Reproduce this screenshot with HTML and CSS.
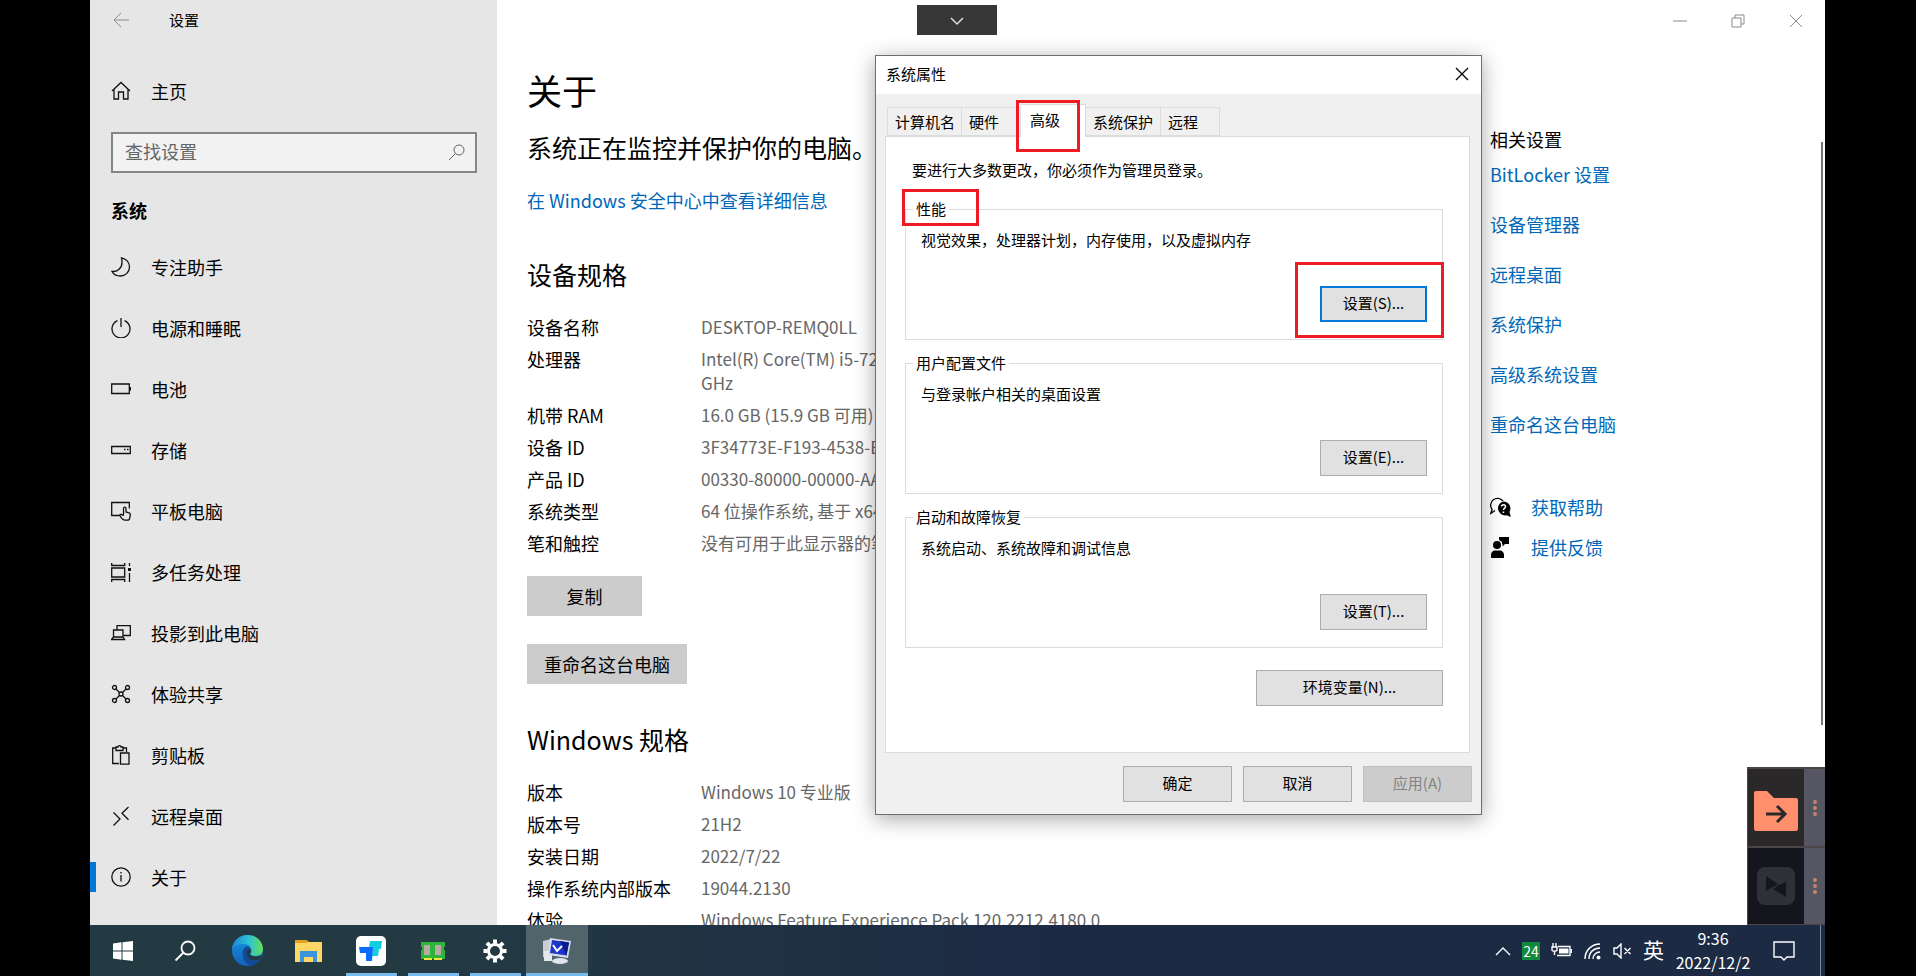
FILE: index.html
```
<!DOCTYPE html>
<html lang="zh-CN">
<head>
  <meta charset="UTF-8" />
  <meta name="viewport" content="width=device-width, initial-scale=1.0"/>
  <title>设置 - 关于</title>
  <link rel="stylesheet" href="styles.css">
</head>
<body>

  <div class="desktop">
    <div class="window">

      <aside class="sidebar">
        <header class="sidebar-title">
          <button class="back" aria-label="返回">
            <svg width="18" height="18" viewBox="0 0 18 18"><path d="M17 9H2M9 2L2 9l7 7"/></svg>
          </button>
          <span>设置</span>
        </header>

        <a class="nav-link home" href="#">
          <svg class="icon" viewBox="0 0 20 20"><path d="M1 10L10 1.500l9 8.500M3 8.500V18h4.500v-7h5v7H17V8.500"/></svg>
          主页
        </a>

        <div class="search">
          <input type="text" placeholder="查找设置" aria-label="查找设置">
          <svg width="17" height="17" viewBox="0 0 17 17"><circle cx="11" cy="6" r="5"/><path d="M7.500 9.500L1 16"/></svg>
        </div>

        <h2 class="group">系统</h2>

        <nav>
          <a class="nav-link" href="#">
            <svg class="icon" viewBox="0 0 20 20"><path d="M10.500.8c4.500 1 8 4.500 8 9.200a9 9 0 0 1-9 9C5.500 19 2.500 17.300 1 14.500c5.500.3 10-3.500 10-9 0-1.700-.1-3.200-.5-4.700z"/></svg>
            专注助手
          </a>
          <a class="nav-link" href="#">
            <svg class="icon" viewBox="0 0 20 20"><path d="M6.500 2.600a9 9 0 1 0 7 0M10 0v9"/></svg>
            电源和睡眠
          </a>
          <a class="nav-link" href="#">
            <svg class="icon" viewBox="0 0 20 20"><path d="M.7 5h17.600v9.500H.7zM19.500 8v3.500"/></svg>
            电池
          </a>
          <a class="nav-link" href="#">
            <svg class="icon" viewBox="0 0 20 20"><path d="M.7 6.500h18.600v7H.7zM13 9.500h1.500M16 9.500h1.500"/></svg>
            存储
          </a>
          <a class="nav-link" href="#">
            <svg class="icon" viewBox="0 0 20 20"><path d="M9 14.500H.7v-13h17.600v6M12.500 14V7.500c0-1.800 2.500-1.800 2.500 0V11l3 .8c1 .3 1.400 1 1.300 2l-.5 3c-.2 1.500-1.200 2.400-2.600 2.400h-2c-3 0-4.200-2.500-5.200-4.700-.3-1.300 1.500-1.500 2.200-.5z"/></svg>
            平板电脑
          </a>
          <a class="nav-link" href="#">
            <svg class="icon" viewBox="0 0 20 20"><path d="M.7 1v2.500h13V1M.7 6h13v9H.7zM.7 20v-2.500h13V20M18.500 1v3M18.500 11v9"/><path d="M17 6h3v3h-3z" fill="#111" stroke="none"/></svg>
            多任务处理
          </a>
          <a class="nav-link" href="#">
            <svg class="icon" viewBox="0 0 20 20"><path d="M6 7V2.700h13.300v9.800h-7M2.500 7h9.500v7h-9.500zM.5 16.500L2.500 14h9.500l1.500 2.500z"/></svg>
            投影到此电脑
          </a>
          <a class="nav-link" href="#">
            <svg class="icon" viewBox="0 0 20 20"><circle cx="3.500" cy="3.500" r="2"/><circle cx="16.500" cy="3.500" r="2"/><circle cx="3.500" cy="16.500" r="2"/><circle cx="16.500" cy="16.500" r="2"/><circle cx="10" cy="10" r="2"/><path d="M5 5l3.500 3.500M15 5l-3.500 3.500M5 15l3.500-3.500M15 15l-3.500-3.500"/></svg>
            体验共享
          </a>
          <a class="nav-link" href="#">
            <svg class="icon" viewBox="0 0 20 20"><path d="M8 18.500H1.700V3H5M12 3h3.500v4M5 2h2c0-1.800 3-1.800 3 0h2v3.500H5zM9.500 8H18v11.200H9.500z"/></svg>
            剪贴板
          </a>
          <a class="nav-link" href="#">
            <svg class="icon" viewBox="0 0 20 20"><path d="M2.500 6.500L9 13l-6.500 6.500M17.500 1L11 7.300l6.500 6.500"/></svg>
            远程桌面
          </a>
          <a class="nav-link active" href="#">
            <svg class="icon" viewBox="0 0 20 20"><circle cx="10" cy="10" r="9.200"/><path d="M10 8v6.500M10 5v1.500"/></svg>
            关于
          </a>
        </nav>
      </aside>

      <div class="page">
        <div class="controls">
          <button aria-label="最小化"><svg width="14" height="14" viewBox="0 0 14 14"><path d="M0 7h14"/></svg></button>
          <button aria-label="还原"><svg width="14" height="14" viewBox="0 0 14 14"><path d="M1 4h9v9H1zM4 4V1h9v9h-3"/></svg></button>
          <button aria-label="关闭"><svg width="14" height="14" viewBox="0 0 14 14"><path d="M1 1l12 12M13 1L1 13"/></svg></button>
        </div>

        <div class="columns">
          <main class="about">
            <h1>关于</h1>
            <p class="tagline">系统正在监控并保护你的电脑。</p>
            <a class="security" href="#">在 Windows 安全中心中查看详细信息</a>

            <h2>设备规格</h2>
            <table>
              <tr><th>设备名称</th><td>DESKTOP-REMQ0LL</td></tr>
              <tr><th>处理器</th><td>Intel(R) Core(TM) i5-7200U<br>GHz</td></tr>
              <tr><th>机带 RAM</th><td>16.0 GB (15.9 GB 可用)</td></tr>
              <tr><th>设备 ID</th><td>3F34773E-F193-4538-B</td></tr>
              <tr><th>产品 ID</th><td>00330-80000-00000-AA</td></tr>
              <tr><th>系统类型</th><td>64 位操作系统, 基于 x64</td></tr>
              <tr><th>笔和触控</th><td>没有可用于此显示器的笔</td></tr>
            </table>
            <button class="action copy">复制</button>
            <button class="action rename">重命名这台电脑</button>

            <h2 class="second">Windows 规格</h2>
            <table>
              <tr><th>版本</th><td>Windows 10 专业版</td></tr>
              <tr><th>版本号</th><td>21H2</td></tr>
              <tr><th>安装日期</th><td>2022/7/22</td></tr>
              <tr><th>操作系统内部版本</th><td>19044.2130</td></tr>
              <tr><th>体验</th><td>Windows Feature Experience Pack 120.2212.4180.0</td></tr>
            </table>
          </main>

          <aside class="related">
            <h3>相关设置</h3>
            <ul>
              <li><a href="#">BitLocker 设置</a></li>
              <li><a href="#">设备管理器</a></li>
              <li><a href="#">远程桌面</a></li>
              <li><a href="#">系统保护</a></li>
              <li><a href="#">高级系统设置</a></li>
              <li><a href="#">重命名这台电脑</a></li>
            </ul>
            <div class="help">
              <svg width="21" height="21" viewBox="0 0 21 21"><path d="M5 13.500L.8 16.500l1.300-4A6.500 6.500 0 1 1 13 4" fill="none" stroke="#000" stroke-width="1.300"/><path d="M13.500 4.500a7 7 0 0 1 6 10.500l1.300 5-4.300-1.800a7 7 0 1 1-3-13.700z"/><path d="M11.500 9.500c0-2.500 4-2.500 4 0 0 1.700-2 1.500-2 3.500M13.500 14.500V16" fill="none" stroke="#fff" stroke-width="1.500"/></svg>
              <a href="#">获取帮助</a>
            </div>
            <div class="help">
              <svg width="21" height="21" viewBox="0 0 21 21"><circle cx="7" cy="8" r="4"/><path d="M1 21v-3c0-3 2-4.500 4-4.500h5c2 0 4 1.500 4 4.500v3zM9 0h10v7h-4l-2.500 2.500V7H12V5L9 3z"/></svg>
              <a href="#">提供反馈</a>
            </div>
          </aside>
        </div>
        <div class="scrollbar"></div>
      </div>
    </div>

    <!-- 系统属性 -->
    <section class="dialog">
      <header class="dialog-title">
        <span>系统属性</span>
        <button aria-label="关闭"><svg width="14" height="14" viewBox="0 0 14 14"><path d="M1 1l12 12M13 1L1 13"/></svg></button>
      </header>
      <div class="dialog-body">
        <div class="tabs">
          <button class="tab wide">计算机名</button>
          <button class="tab">硬件</button>
          <button class="tab current">高级<span class="mark mark-tab"></span></button>
          <button class="tab wide">系统保护</button>
          <button class="tab">远程</button>
        </div>
        <div class="panel">
          <p>要进行大多数更改，你必须作为管理员登录。</p>
          <fieldset>
            <legend>性能<span class="mark mark-legend"></span></legend>
            <p>视觉效果，处理器计划，内存使用，以及虚拟内存</p>
            <button class="btn focused">设置(S)...<span class="mark mark-button"></span></button>
          </fieldset>
          <fieldset>
            <legend>用户配置文件</legend>
            <p>与登录帐户相关的桌面设置</p>
            <button class="btn">设置(E)...</button>
          </fieldset>
          <fieldset>
            <legend>启动和故障恢复</legend>
            <p>系统启动、系统故障和调试信息</p>
            <button class="btn">设置(T)...</button>
          </fieldset>
          <button class="btn env">环境变量(N)...</button>
        </div>
        <div class="dialog-buttons">
          <button class="btn">确定</button>
          <button class="btn">取消</button>
          <button class="btn" disabled>应用(A)</button>
        </div>
      </div>
    </section>

    <button class="handle" aria-label="展开">
      <svg width="14" height="9" viewBox="0 0 14 9"><path d="M1 1l6 6 6-6"/></svg>
    </button>

    <!-- 悬浮工具 -->
    <div class="dock">
      <div class="dock-item">
        <div class="dock-icon">
          <svg width="44" height="40" viewBox="0 0 44 40"><path d="M2 0h11l7 7h22a2 2 0 0 1 2 2v29a2 2 0 0 1-2 2H2a2 2 0 0 1-2-2V2a2 2 0 0 1 2-2z" fill="#ff8f6d"/><path d="M12 23h19M23 15l8 8-8 8" fill="none" stroke="#2a2828" stroke-width="3"/></svg>
        </div>
        <div class="dots"><i></i><i></i><i></i></div>
      </div>
      <div class="dock-item dark">
        <div class="dock-icon">
          <svg width="38" height="38" viewBox="0 0 38 38"><rect width="38" height="38" rx="8" fill="#303137"/><path d="M9 9v14l20-8v15z" fill="#15161d"/><path d="M9 9l12 8-12 7zM29 15v15l-13-8z" fill="#15161d"/><path d="M13 22l12-6" stroke="#303137"/></svg>
        </div>
        <div class="dots"><i></i><i></i><i></i></div>
      </div>
    </div>

    <footer class="taskbar">
      <button class="task" aria-label="开始">
        <svg width="20" height="20" viewBox="0 0 20 20" fill="#fff"><path d="M0 2.500l8.500-1.200v8.200H0zM9.500 1.200L20 0v9.500H9.500zM0 10.500h8.500v8.200L0 17.500zM9.500 10.500H20V20L9.500 18.800z"/></svg>
      </button>
      <button class="task" aria-label="搜索">
        <svg width="22" height="22" viewBox="0 0 22 22" fill="none" stroke="#fff" stroke-width="1.800"><circle cx="14" cy="8" r="6.500"/><path d="M9.500 12.500L1.500 20.500"/></svg>
      </button>
      <button class="task" aria-label="Microsoft Edge">
        <svg width="31" height="31" viewBox="0 0 31 31">
          <defs>
            <linearGradient id="edgeTop"><stop offset="0" stop-color="#1687d9"/><stop offset=".55" stop-color="#2fc2d4"/><stop offset="1" stop-color="#67dd4f"/></linearGradient>
            <linearGradient id="edgeSide" x2="0" y2="1"><stop offset="0" stop-color="#1694dd"/><stop offset="1" stop-color="#1560bd"/></linearGradient>
          </defs>
          <circle cx="15.500" cy="15.500" r="15.500" fill="url(#edgeSide)"/>
          <path d="M11 22c-2-8 3-12 6-10l5 8 7 3c-3 5-6 7-9 8-4-1-8-4-9-9z" fill="#124a94"/>
          <path d="M0 14C1 5 8 0 15.500 0 25 0 31 7 31 14c0 5-4 7-8 7-3 0-5-1-5-2s1.500-2 1.500-4c0-3-3-6-7.500-6C6 9 2 11 0 14z" fill="url(#edgeTop)"/>
          <path d="M18 19c1 3 7 3.500 12 1l-1 3c-4 3-10 3-13-1-2-3-1-7 1-8 2 0 3 3 1 5z" fill="#233a43"/>
        </svg>
      </button>
      <button class="task" aria-label="文件资源管理器">
        <svg width="28" height="24" viewBox="0 0 28 24"><path d="M0 1h11l3 2h13v20H0z" fill="#ffd766"/><path d="M0 1h11l2 3H0z" fill="#e5a018"/><path d="M5 23V12h17v11h-4v-5H9v5z" fill="#3a96dc"/></svg>
      </button>
      <button class="task open" aria-label="ToDesk">
        <svg width="30" height="30" viewBox="0 0 30 30"><rect width="30" height="30" rx="5" fill="#fff"/><path d="M14 5h12l-1 8h-2l-1 7h-6l1-9h-4z" fill="#12cfe0"/><path d="M3 11h14l-1 14h-6v-8H4z" fill="#0a6cff"/></svg>
      </button>
      <button class="task open" aria-label="内存清理">
        <svg width="24" height="18" viewBox="0 0 24 18"><path d="M0 0h24v5h-1v3h1v9H0V8h1V5H0z" fill="#2cb53a"/><path d="M3 3h6v10H3zM14 3h6v10h-6z" fill="#b9aaa5"/><path d="M3 17h8M13 17h8" stroke="#ffe93b" stroke-width="2"/></svg>
      </button>
      <button class="task open" aria-label="设置">
        <svg width="24" height="24" viewBox="-12 -12 24 24"><circle r="6.500" fill="none" stroke="#fff" stroke-width="3"/><path d="M0-11.500v4M0 7.500v4M-11.500 0h4M7.500 0h4M-8.100-8.100l2.800 2.800M5.300 5.300l2.800 2.800M-8.100 8.100l2.800-2.800M5.300-5.300l2.800-2.800" stroke="#fff" stroke-width="4"/></svg>
      </button>
      <button class="task open selected" aria-label="系统属性">
        <svg width="30" height="28" viewBox="0 0 30 28"><path d="M1 4l8-2v20l-8-2z" fill="#c9ced3"/><path d="M2 14h8v10H2z" fill="#e6e9eb"/><path d="M8 1l21 3-3 17L6 18z" fill="#d7dbe6"/><path d="M10 3l17 2.500-2.500 13L8 16z" fill="#1f35c8"/><path d="M18 4l9 1.500-2.500 13z" fill="#0b1a8c"/><path d="M11 8l4 6 5-5" fill="none" stroke="#fff" stroke-width="2"/><ellipse cx="18" cy="24" rx="8" ry="3" fill="#e1e4ea"/></svg>
      </button>

      <div class="tray">
        <svg width="16" height="10" viewBox="0 0 16 10"><path d="M1 9l7-7 7 7"/></svg>
        <span class="temp">24</span>
        <svg width="22" height="16" viewBox="0 0 22 16"><path d="M7 3.500h12v9H6M1 4h5v3c0 1.500-5 1.500-5 0zM2 0v4M5 0v4M3.500 8.500V12"/><path d="M8 5.500h9.500v5H8zM19.500 6H21v4h-1.500z" fill="#fff" stroke="none"/></svg>
        <svg width="18" height="18" viewBox="0 0 18 18"><path d="M1 17C1 8 8 2 16 2M5 17C5 10 10 6 16 6M9 17c0-4 3-7 7-7"/><circle cx="14.500" cy="15.500" r="2" fill="#fff" stroke="none"/></svg>
        <svg width="19" height="16" viewBox="0 0 19 16"><path d="M1 5h3l4-4v14l-4-4H1zM11.500 5l6 6M17.500 5l-6 6"/></svg>
        <span class="ime">英</span>
        <time class="clock">9:36<br>2022/12/2</time>
        <svg class="notice" width="22" height="22" viewBox="0 0 22 22"><path d="M1 2h20v15h-7l-3 3-3-3H1z"/></svg>
        <span class="peek"></span>
      </div>
    </footer>
  </div>

</body>
</html>
```
FILE: styles.css
```
* {
  box-sizing: border-box;
}

body {
  margin: 0;
  padding: 0 91px 0 90px;
  background-color: #000;
  color: #000;
  font-family: "Noto Sans CJK SC", "Noto Sans", sans-serif;
  font-size: 18px;
  line-height: 24px;
}

button, input {
  font: inherit;
  color: inherit;
}

button {
  border: none;
  background: none;
  padding: 0;
}

h1, h2, h3, p, ul {
  margin: 0;
  padding: 0;
  font-weight: normal;
}

a {
  color: #0067b8;
  text-decoration: none;
}

.desktop {
  position: relative;
  height: 100vh;
  display: flex;
  flex-direction: column;
  overflow: hidden;
  background-color: #fff;
}

.window {
  flex: 1;
  min-height: 0;
  display: flex;
  overflow: hidden;
}

/* sidebar */
.sidebar {
  width: 407px;
  flex-shrink: 0;
  background-color: #e6e6e6;
}

.sidebar-title {
  display: flex;
  align-items: center;
  gap: 39px;
  height: 40px;
  padding-left: 22px;
  font-size: 15px;
}

.back {
  display: flex;
}

.back svg {
  fill: none;
  stroke: #8c8c8c;
}

.nav-link {
  display: flex;
  align-items: center;
  gap: 20px;
  height: 61px;
  padding-left: 21px;
  color: #000;
}

.nav-link.home {
  height: 40px;
  margin-top: 31px;
}

.nav-link.active {
  background: linear-gradient(#0078d7, #0078d7) left center / 6px 30px no-repeat;
}

.icon {
  width: 20px;
  height: 20px;
  fill: none;
  stroke: #111;
  stroke-width: 1.3;
}

.search {
  display: flex;
  align-items: center;
  height: 41px;
  margin: 21px 20px 0 21px;
  padding: 0 10px 0 12px;
  border: 2px solid #858787;
  background-color: #f2f2f2;
}

.search input {
  flex: 1;
  min-width: 0;
  padding: 0 0 4px;
  border: none;
  outline: none;
  background: none;
}

.search input::placeholder {
  color: #666;
}

.search svg {
  fill: none;
  stroke: #666;
}

.group {
  margin: 25px 0 14px 21px;
  font-size: 18px;
  font-weight: bold;
}

/* settings page */
.page {
  flex: 1;
  min-width: 0;
  position: relative;
}

.controls {
  display: flex;
  justify-content: flex-end;
  height: 40px;
}

.controls button {
  width: 58px;
}

.controls svg {
  fill: none;
  stroke: #8a8a8a;
}

.columns {
  display: flex;
}

.about {
  flex: 1;
  min-width: 0;
  padding: 26px 0 0 30px;
  white-space: nowrap;
}

.about h1 {
  font-size: 35px;
  line-height: 48px;
}

.tagline {
  margin-top: 17px;
  font-size: 25px;
  line-height: 32px;
}

.security {
  display: block;
  margin-top: 25px;
}

.about h2 {
  margin: 46px 0 21px;
  font-size: 25px;
  line-height: 32px;
}

.about h2.second {
  margin-top: 39px;
}

table {
  border-collapse: collapse;
}

th, td {
  padding: 4px 0;
  text-align: left;
  vertical-align: top;
  font-weight: normal;
}

th {
  width: 174px;
}

td {
  color: #666;
  font-size: 17px;
}

.action {
  display: block;
  height: 40px;
  background-color: #ccc;
}

.copy {
  width: 115px;
  margin-top: 17px;
}

.rename {
  width: 160px;
  margin-top: 28px;
}

.related {
  width: 335px;
  flex-shrink: 0;
  padding-top: 87px;
}

.related h3 {
  font-size: 18px;
}

.related ul {
  list-style: none;
  margin: 11px 0 25px;
}

.related li {
  height: 50px;
}

.help {
  display: flex;
  align-items: center;
  gap: 20px;
  height: 40px;
}

.scrollbar {
  position: absolute;
  top: 142px;
  right: 2px;
  width: 2px;
  height: 583px;
  background-color: #767676;
}

/* system properties dialog */
.dialog {
  position: absolute;
  left: 785px;
  top: 55px;
  width: 607px;
  border: 1px solid #6e6e6e;
  background-color: #f0f0f0;
  box-shadow: 0 4px 20px rgba(0, 0, 0, 0.35);
  font-size: 15px;
  line-height: 20px;
}

.dialog-title {
  display: flex;
  align-items: center;
  justify-content: space-between;
  height: 38px;
  padding: 0 12px 2px 10px;
  background-color: #fff;
}

.dialog-title button {
  display: flex;
}

.dialog-title svg {
  fill: none;
  stroke: #000;
  stroke-width: 1.3;
}

.dialog-body {
  padding: 10px 11px 12px 9px;
}

.tabs {
  display: flex;
  align-items: flex-end;
  height: 32px;
  padding-left: 2px;
}

.tab {
  width: 59px;
  height: 29px;
  padding: 0 7px;
  border: 1px solid #dcdcdc;
  border-left: none;
  text-align: left;
  white-space: nowrap;
}

.tab.wide {
  width: 75px;
}

.tab:first-child {
  border-left: 1px solid #dcdcdc;
}

.tab.current {
  position: relative;
  width: 65px;
  height: 33px;
  padding: 0 9px 3px;
  border-bottom: none;
  background-color: #fff;
  margin-bottom: -1px;
}

.panel {
  padding: 23px 26px 46px 19px;
  border: 1px solid #dcdcdc;
  background-color: #fff;
}

.panel > p {
  margin: 0 0 19px 7px;
}

fieldset {
  min-width: 0;
  margin: 0 0 13px;
  padding: 11px 15px 17px;
  border: 1px solid #dcdcdc;
}

legend {
  position: relative;
  margin-left: -8px;
  padding: 0 3px;
}

.btn {
  display: block;
  width: 109px;
  height: 36px;
  padding-bottom: 3px;
  border: 1px solid #adadad;
  background-color: #e1e1e1;
}

fieldset .btn {
  position: relative;
  width: 107px;
  margin: 36px 0 0 auto;
}

.btn.focused {
  border: 2px solid #0078d7;
}

.btn.env {
  width: 187px;
  margin: 22px 0 0 auto;
}

.btn:disabled {
  border-color: #bfbfbf;
  background-color: #ccc;
  color: #838383;
}

.dialog-buttons {
  display: flex;
  justify-content: flex-end;
  gap: 11px;
  margin: 13px -2px 0 0;
}

/* red highlight frames */
.mark {
  position: absolute;
  border: 3px solid #ed1c24;
  pointer-events: none;
}

.mark-tab {
  inset: -5px 5px -15px -5px;
}

.mark-legend {
  inset: -10px -30px -7px -11px;
}

.mark-button {
  inset: -26px -19px -18px -27px;
}

.handle {
  position: absolute;
  left: 827px;
  top: 5px;
  width: 80px;
  height: 30px;
  padding-bottom: 5px;
  background-color: #373737;
}

.handle svg {
  fill: none;
  stroke: #ddd;
  stroke-width: 1.5;
}

.dock {
  position: absolute;
  right: 0;
  bottom: 51px;
  width: 78px;
  border: 1px solid #4b4545;
  border-width: 2px 0 1px 1px;
}

.dock-item {
  display: flex;
  height: 77px;
  background-color: #2a2828;
}

.dock-item.dark {
  height: 78px;
  border-top: 2px solid #4b4545;
  background-color: #15161d;
}

.dock-icon {
  flex: 1;
  display: flex;
  align-items: center;
  justify-content: center;
}

.dock-item:first-child .dock-icon {
  padding-top: 6px;
}

.dots {
  width: 21px;
  display: flex;
  flex-direction: column;
  align-items: center;
  justify-content: center;
  gap: 2px;
  background-color: #555564;
}

.dots i {
  width: 4px;
  height: 4px;
  border-radius: 50%;
  background-color: #c88368;
}

/* taskbar */
.taskbar {
  display: flex;
  height: 51px;
  padding-left: 2px;
  background: linear-gradient(90deg, #233a43 20%, #1c2a44 55%);
}

.task {
  width: 62px;
  display: flex;
  align-items: center;
  justify-content: center;
}

.task.open {
  background: linear-gradient(#76b9ed, #76b9ed) center bottom / 51px 3px no-repeat;
}

.task.selected {
  background-color: #51636b;
  background-size: 62px 3px;
}

.tray {
  display: flex;
  align-items: center;
  gap: 11px;
  margin-left: auto;
  color: #fff;
}

.tray svg {
  fill: none;
  stroke: #fff;
  stroke-width: 1.4;
}

.temp {
  width: 18px;
  height: 18px;
  background-color: #10893e;
  font-size: 14px;
  line-height: 18px;
  text-align: center;
}

.ime {
  padding-bottom: 3px;
  font-size: 21px;
}

.clock {
  width: 76px;
  padding-bottom: 2px;
  font-size: 16px;
  text-align: center;
}

.notice {
  margin: 0 14px 0 11px;
}

.peek {
  width: 5px;
  height: 51px;
  border-left: 1px solid #7b879b;
}
```
